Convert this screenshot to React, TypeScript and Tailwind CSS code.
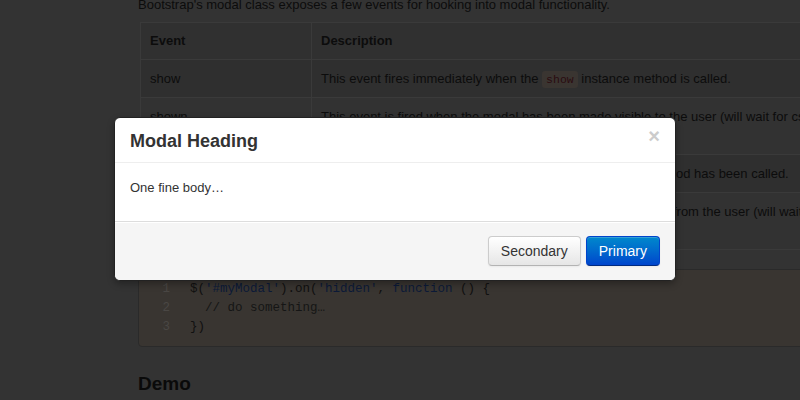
const events = [
  { name: "show", desc: <>This event fires immediately when the <Code>show</Code> instance method is called.</> },
  { name: "shown", desc: <>This event is fired when the modal has been made visible to the user (will wait for css transitions to complete).</> },
  { name: "hide", desc: <>This event is fired immediately when the <Code>hide</Code> instance method has been called.</> },
  { name: "hidden", desc: <>This event is fired when the modal has finished being hidden from the user (will wait for css transitions to complete).</> },
];

function Code({ children }: { children: React.ReactNode }) {
  return (
    <code className="px-[4px] py-[2px] rounded-[3px] bg-[#3a3531] text-[#2a0c10] text-[11.5px] font-['Liberation_Mono',monospace]">
      {children}
    </code>
  );
}

function App() {
  return (
    <div className="relative w-[800px] h-[400px] overflow-hidden bg-[#333333] font-['Liberation_Sans',Arial,sans-serif] text-[13px] leading-5 text-[#0c0c0c]">
      {/* dimmed docs page */}
      <div className="pl-[138px] w-[840px]">
        <p className="-mt-[5px]">Bootstrap's modal class exposes a few events for hooking into modal functionality.</p>

        <table className="mt-[7px] ml-[2px] w-[700px] border-collapse">
          <thead>
            <tr>
              <th className="w-[171px] px-[9px] py-[8px] text-left font-bold border border-[#3a3a3a] bg-[#303030]">Event</th>
              <th className="px-[9px] py-[8px] text-left font-bold border border-[#3a3a3a] bg-[#303030]">Description</th>
            </tr>
          </thead>
          <tbody>
            {events.map((e, i) => (
              <tr key={e.name} className={i % 2 === 0 ? "bg-[#2f2f2f]" : "bg-[#323232]"}>
                <td className="px-[9px] pt-[9px] pb-[7px] align-top border border-[#3a3a3a]">{e.name}</td>
                <td className="px-[9px] pt-[9px] pb-[7px] align-top border border-[#3a3a3a]">{e.desc}</td>
              </tr>
            ))}
          </tbody>
        </table>

        {/* code sample */}
        <pre className="mt-[19px] w-[700px] py-[9.5px] border border-[#2a2a2a] rounded-[4px] bg-[#393531] text-[12.5px] leading-[19px] font-['Liberation_Mono',monospace]">
          <div className="flex">
            <span className="w-[31px] text-right text-[#4a4744]">1</span>
            <span className="pl-[20px]">
              <span className="text-[#101010]">$(</span>
              <span className="text-[#0c1a38]">'#myModal'</span>
              <span className="text-[#101010]">).on(</span>
              <span className="text-[#0c1a38]">'hidden'</span>
              <span className="text-[#101010]">, </span>
              <span className="text-[#0c1a38]">function</span>
              <span className="text-[#101010]"> () {"{"}</span>
            </span>
          </div>
          <div className="flex">
            <span className="w-[31px] text-right text-[#4a4744]">2</span>
            <span className="pl-[20px] text-[#151515]">{"  // do something…"}</span>
          </div>
          <div className="flex">
            <span className="w-[31px] text-right text-[#4a4744]">3</span>
            <span className="pl-[20px] text-[#101010]">{"})"}</span>
          </div>
        </pre>

        <h3 className="mt-[25px] text-[19px] leading-6 font-bold text-[#0a0a0a]">Demo</h3>
      </div>

      {/* Modal */}
      <div className="absolute left-[114px] top-[117px] w-[562px] bg-white rounded-[6px] border border-[#222222] shadow-[0_3px_7px_rgba(0,0,0,0.3)] overflow-hidden text-[#333333]">
        <div className="h-[45px] px-[15px] flex items-center justify-between border-b border-[#eeeeee]">
          <h3 className="text-[18px] leading-[30px] font-bold mt-[1px]">Modal Heading</h3>
          <button className="self-start mt-[8px] text-[20px] leading-5 font-bold text-[#cccccc] cursor-pointer">×</button>
        </div>
        <div className="px-[15px] pt-[15px] pb-[23px]">
          <p className="text-[13px] leading-5">One fine body…</p>
        </div>
        <div className="px-[15px] pt-[14px] pb-[14px] flex justify-end gap-[5px] bg-[#f5f5f5] border-t border-[#dddddd] shadow-[inset_0_1px_0_#ffffff]">
          <button className="h-[30px] px-[12px] rounded-[4px] border border-[#cccccc] border-b-[#b3b3b3] bg-gradient-to-b from-white to-[#e6e6e6] text-[#333333] text-[14px] leading-5 shadow-[inset_0_1px_0_rgba(255,255,255,0.2),0_1px_2px_rgba(0,0,0,0.05)]">
            Secondary
          </button>
          <button className="h-[30px] px-[12px] rounded-[4px] border border-[#0044cc] border-b-[#002a80] bg-gradient-to-b from-[#0088cc] to-[#0044cc] text-white text-[14px] leading-5 shadow-[inset_0_1px_0_rgba(255,255,255,0.2),0_1px_2px_rgba(0,0,0,0.05)]">
            Primary
          </button>
        </div>
      </div>
    </div>
  );
}

export default App;
